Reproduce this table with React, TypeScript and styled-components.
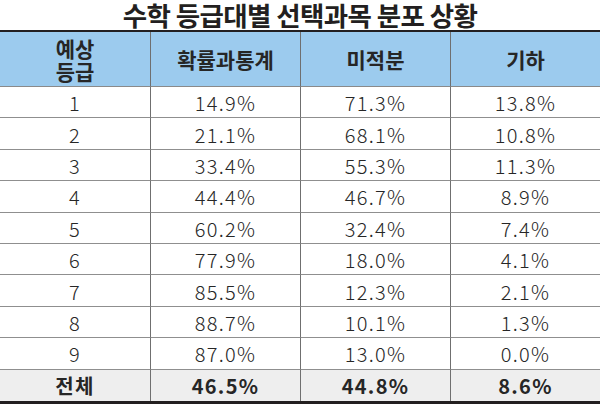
import React from "react";
import styled, { createGlobalStyle } from "styled-components";

const Global = createGlobalStyle`
  html, body { margin: 0; padding: 0; background: #fff; }
  body { font-family: "Noto Sans CJK KR", "Noto Sans", sans-serif; color: #2b2b2b; }
`;

const Page = styled.div`
  width: 600px;
  height: 405px;
  display: flex;
  flex-direction: column;
  overflow: hidden;
`;

const Title = styled.h1`
  margin: 0;
  height: 30px;
  font-size: 26.5px;
  font-weight: 700;
  line-height: 30px;
  text-align: center;
  color: #231f20;
  letter-spacing: -0.6px;
  white-space: nowrap;
`;

const Grid = styled.div`
  display: grid;
  grid-template-columns: 151px 150px 150px 149px;
  border-top: 2px solid #231f20;
  border-bottom: 3px solid #231f20;
`;

const Cell = styled.div<{ $last?: boolean; $kind: "head" | "body" | "total"; $lastRow?: boolean }>`
  display: flex;
  align-items: center;
  justify-content: center;
  box-sizing: border-box;
  height: ${(p) => (p.$kind === "head" ? "55px" : "31.4px")};
  border-right: ${(p) => (p.$last ? "none" : "1px solid #6f6f6f")};
  border-bottom: ${(p) => (p.$lastRow ? "none" : p.$kind === "head" ? "1px solid #8a8a8a" : "1px solid #8f8f8f")};
  background: ${(p) => (p.$kind === "head" ? "#9ccbee" : p.$kind === "total" ? "#eeeeee" : "#ffffff")};
  font-size: ${(p) => (p.$kind === "head" ? "21px" : "20px")};
  font-weight: ${(p) => (p.$kind === "body" ? 300 : 700)};
  letter-spacing: ${(p) => (p.$kind === "head" ? "0" : "1.3px")};
  color: #262626;
  text-align: center;
  line-height: ${(p) => (p.$kind === "head" ? "23px" : "21px")};
  padding-top: 1px;
`;

const headers = ["예상\n등급", "확률과통계", "미적분", "기하"];
const rows = [
  ["1", "14.9%", "71.3%", "13.8%"],
  ["2", "21.1%", "68.1%", "10.8%"],
  ["3", "33.4%", "55.3%", "11.3%"],
  ["4", "44.4%", "46.7%", "8.9%"],
  ["5", "60.2%", "32.4%", "7.4%"],
  ["6", "77.9%", "18.0%", "4.1%"],
  ["7", "85.5%", "12.3%", "2.1%"],
  ["8", "88.7%", "10.1%", "1.3%"],
  ["9", "87.0%", "13.0%", "0.0%"],
];
const total = ["전체", "46.5%", "44.8%", "8.6%"];

export default function App() {
  return (
    <Page>
      <Global />
      <Title>수학 등급대별 선택과목 분포 상황</Title>
      <Grid>
        {headers.map((h, i) => (
          <Cell key={"h" + i} $kind="head" $last={i === 3}>
            <span style={{ whiteSpace: "pre-line" }}>{h}</span>
          </Cell>
        ))}
        {rows.map((r, ri) =>
          r.map((v, i) => (
            <Cell key={ri + "-" + i} $kind="body" $last={i === 3}>
              {v}
            </Cell>
          ))
        )}
        {total.map((v, i) => (
          <Cell key={"t" + i} $kind="total" $last={i === 3} $lastRow>
            {v}
          </Cell>
        ))}
      </Grid>
    </Page>
  );
}
